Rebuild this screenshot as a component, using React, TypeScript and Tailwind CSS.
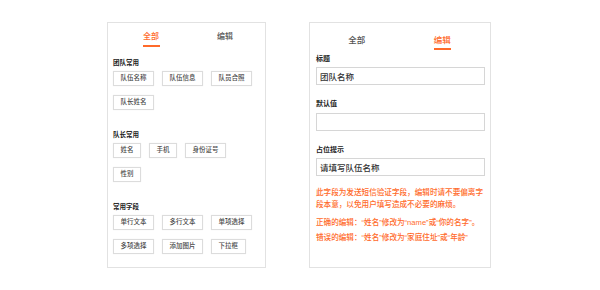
import { useState } from "react";

// 表单字段面板：左侧字段库，右侧字段编辑
type Tab = "all" | "edit";

const groups: { title: string; items: string[] }[] = [
  { title: "团队常用", items: ["队伍名称", "队伍信息", "队员合照", "队长姓名"] },
  { title: "队长常用", items: ["姓名", "手机", "身份证号", "性别"] },
  { title: "常用字段", items: ["单行文本", "多行文本", "单项选择", "多项选择", "添加图片", "下拉框"] },
];

const font = "font-['Noto_Sans_CJK_SC','Noto_Sans',sans-serif]";

function Tabs({ active, size }: { active: Tab; size: "sm" | "md" }) {
  const text = size === "sm" ? "text-[8px]" : "text-[8.5px]";
  const item = (key: Tab, label: string) => {
    const on = key === active;
    return (
      <div className="flex flex-col items-center">
        <span className={`${text} leading-[10px] font-medium ${on ? "text-[#ff6a2a]" : "text-[#555]"}`}>
          {label}
        </span>
        <span className={`mt-[4px] h-[1.5px] w-[17px] ${on ? "bg-[#ff6a2a]" : "bg-transparent"}`} />
      </div>
    );
  };
  return (
    <div className="grid grid-cols-2">
      {item("all", "全部")}
      {item("edit", "编辑")}
    </div>
  );
}

function LibraryPanel() {
  return (
    <div className="w-[159px] h-[246px] border border-[#e2e2e2] bg-white">
      <div className="pl-[6px] pr-[3px] pt-[8px]">
        <Tabs active="all" size="sm" />
      </div>
      <div className="px-[5px] mt-[12px]">
        {groups.map((g, i) => (
          <div key={g.title} className={i > 0 ? "mt-[21px]" : ""}>
            <div className="text-[6.5px] leading-[7px] font-bold text-[#222] mb-[5px]">{g.title}</div>
            <div className="flex flex-wrap gap-x-[8px] gap-y-[9px]">
              {g.items.map((it) => (
                <div
                  key={it}
                  className="h-[15px] px-[6.5px] flex items-center border border-[#dcdcdc] text-[6.5px] font-medium text-[#4a4a4a] bg-white shadow-[0_0_1px_rgba(0,0,0,0.08)]"
                >
                  {it}
                </div>
              ))}
            </div>
          </div>
        ))}
      </div>
    </div>
  );
}

function Field({ label, value, first }: { label: string; value: string; first?: boolean }) {
  return (
    <div className={first ? "" : "mt-[14px]"}>
      <div className="text-[7px] leading-[8px] font-bold text-[#222] mb-[5.5px]">{label}</div>
      <div className="h-[18px] border border-[#d6d6d6] px-[3px] flex items-center text-[8.5px] font-medium text-[#333]">
        {value}
      </div>
    </div>
  );
}

function EditPanel() {
  const [tab] = useState<Tab>("edit");
  return (
    <div className="w-[182px] h-[246px] border border-[#e2e2e2] bg-white">
      <div className="pl-[4px] pr-[5px] pt-[11px]">
        <Tabs active={tab} size="md" />
      </div>
      <div className="pl-[6px] pr-[5px] mt-[4px]">
        <Field first label="标题" value="团队名称" />
        <Field label="默认值" value="" />
        <Field label="占位提示" value="请填写队伍名称" />
        <div className="mt-[11px] text-[7.6px] leading-[11.5px] font-medium text-[#ff6a2a] whitespace-nowrap font-['Liberation_Sans','Noto_Sans_CJK_SC',sans-serif]">
          <p>
            此字段为发送短信验证字段，编辑时请不要偏离字
            <br />
            段本意，以免用户填写造成不必要的麻烦。
          </p>
          <p className="mt-[7px]">正确的编辑：“姓名”修改为“name”或“你的名字”。</p>
          <p className="mt-[3px]">错误的编辑：“姓名”修改为“家庭住址”或“年龄”</p>
        </div>
      </div>
    </div>
  );
}

export default function App() {
  return (
    <div className={`w-[600px] h-[290px] bg-white ${font}`}>
      <div className="flex gap-[43px] pl-[107px] pt-[22px]">
        <LibraryPanel />
        <EditPanel />
      </div>
    </div>
  );
}
